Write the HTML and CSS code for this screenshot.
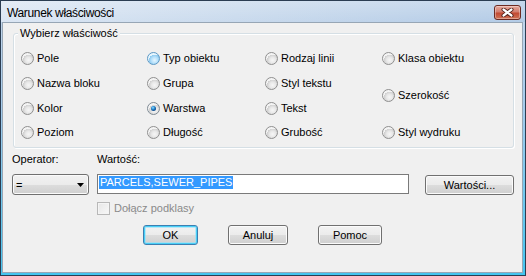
FILE: index.html
```html
<!DOCTYPE html>
<html lang="pl">
<head>
<meta charset="utf-8">
<title>Warunek właściwości</title>
<link rel="stylesheet" href="styles.css">
</head>
<body>
<div class="window">
  <div class="titlebar">
    <span class="title">Warunek właściwości</span>
    <span class="close"><svg width="13" height="9" viewBox="0 0 13 9"><path d="M2.5 1.5 L10.5 7.5 M10.5 1.5 L2.5 7.5" stroke="#4a1a14" stroke-width="4" stroke-linecap="round"/><path d="M2.5 1.5 L10.5 7.5 M10.5 1.5 L2.5 7.5" stroke="#ffffff" stroke-width="2.2" stroke-linecap="round"/></svg></span>
  </div>
  <div class="client">
    <div class="group">
      <div class="legend">Wybierz właściwość</div>
      <div class="options">
        <label class="opt"><span class="radio"></span>Pole</label>
        <label class="opt"><span class="radio hot"></span>Typ obiektu</label>
        <label class="opt"><span class="radio"></span>Rodzaj linii</label>
        <label class="opt"><span class="radio"></span>Klasa obiektu</label>
        <label class="opt"><span class="radio"></span>Nazwa bloku</label>
        <label class="opt"><span class="radio"></span>Grupa</label>
        <label class="opt"><span class="radio"></span>Styl tekstu</label>
        <label class="opt tall"><span class="radio"></span>Szerokość</label>
        <label class="opt"><span class="radio"></span>Kolor</label>
        <label class="opt"><span class="radio checked"></span>Warstwa</label>
        <label class="opt"><span class="radio"></span>Tekst</label>
        <label class="opt"><span class="radio"></span>Poziom</label>
        <label class="opt"><span class="radio"></span>Długość</label>
        <label class="opt"><span class="radio"></span>Grubość</label>
        <label class="opt"><span class="radio"></span>Styl wydruku</label>
      </div>
    </div>
    <div class="fields">
      <div class="lbl">Operator:</div>
      <div class="lbl">Wartość:</div>
      <div></div>
      <div class="combo"><span>=</span><svg width="7" height="4" viewBox="0 0 7 4"><polygon points="0,0 7,0 3.5,4" fill="#000"/></svg></div>
      <div class="textbox"><span class="sel">PARCELS,SEWER_PIPES</span></div>
      <div class="btn small">Wartości...</div>
    </div>
    <div class="checkrow">
      <span class="check"></span><span class="checklbl">Dołącz podklasy</span>
    </div>
    <div class="buttons">
      <div class="btn default w-ok">OK</div>
      <div class="btn w-cancel">Anuluj</div>
      <div class="btn w-help">Pomoc</div>
    </div>
  </div>
</div>
</body>
</html>
```
FILE: styles.css
```css
* { box-sizing: border-box; }
html, body { margin: 0; padding: 0; }
body {
  width: 526px;
  height: 276px;
  overflow: hidden;
  font-family: "Liberation Sans", Arial, sans-serif;
  font-size: 11px;
  color: #000;
  background: #fff;
}
.window {
  width: 526px;
  height: 276px;
  border: 1px solid #2b3d52;
  display: flex;
  flex-direction: column;
  background: linear-gradient(180deg, #d6e3f2 0px, #bfd4eb 22px, #a3cbec 110px, #43c5f0 274px);
}
.titlebar {
  height: 21px;
  flex: none;
  display: flex;
  justify-content: space-between;
  align-items: flex-start;
  padding: 0 4px 0 6px;
  background:
    linear-gradient(180deg, rgba(255,255,255,0.25), rgba(255,255,255,0) 21px),
    linear-gradient(90deg, #dbe6f3 0%, #c9daed 45%, #b3cbe6 100%);
}
.title {
  margin-top: 5px;
  font-size: 12px;
  line-height: 14px;
  letter-spacing: -0.35px;
  color: #000;
}
.close {
  margin-top: 4px;
  width: 27px;
  height: 15px;
  border: 1px solid #6b2a22;
  border-radius: 3px;
  display: flex;
  align-items: center;
  justify-content: center;
  background: linear-gradient(180deg, #e6aa9e 0%, #d27d6e 45%, #c24a33 55%, #cf7357 100%);
  box-shadow: inset 0 0 0 1px rgba(255,255,255,0.35);
}
.client {
  flex: 1;
  margin: 0 2px 2px 1px;
  border: 1px solid #97a6b5;
  background: #f0f0f0;
}
.group {
  position: relative;
  margin: 10px 8px 0 10px;
  border: 1px solid #d5dfe5;
  border-radius: 3px;
  box-shadow: inset 1px 1px 0 #fff, 1px 1px 0 #fff;
  padding: 12px 0 2px 7px;
}
.legend {
  position: absolute;
  left: 4px;
  top: -7px;
  padding: 0 2px;
  line-height: 13px;
  background: #f0f0f0;
}
.options {
  display: grid;
  grid-template-columns: 126px 118px 117px 1fr;
  grid-template-rows: 25px 25px 24px 25px;
}
.opt {
  display: flex;
  align-items: center;
  line-height: 13px;
}
.opt.tall { grid-row: span 2; }
.radio {
  position: relative;
  flex: none;
  width: 13px;
  height: 13px;
  margin-right: 3px;
  border-radius: 50%;
  border: 1px solid #8f8f8f;
  background: radial-gradient(circle at 60% 65%, #f6f6f6 0, #e8e8e8 3px, #cfcfcf 5.5px, #f4f4f4 5.6px);
}
.radio.hot {
  border-color: #5c98c4;
  background: radial-gradient(circle at 60% 65%, #e6f6ff 0, #b9e2fb 3px, #8cc9ef 5.5px, #e8f6fe 5.6px);
}
.radio.checked {
  border-color: #7f8a94;
}
.radio.checked::after {
  content: "";
  position: absolute;
  left: 3px;
  top: 3px;
  width: 5px;
  height: 5px;
  border-radius: 50%;
  background: radial-gradient(circle at 40% 35%, #9be0ff 0, #2a8fd6 1.5px, #0b4a8c 3px);
}
.fields {
  display: grid;
  grid-template-columns: 85px 328px 89px;
  grid-template-rows: 13px 21px;
  row-gap: 8px;
  margin: 5px 0 0 9px;
}
.lbl { line-height: 13px; }
.combo {
  width: 77px;
  height: 21px;
  display: flex;
  align-items: center;
  justify-content: space-between;
  padding: 0 4px 0 3px;
  border: 1px solid #707070;
  border-radius: 3px;
  background: linear-gradient(180deg, #f2f2f2 0%, #ebebeb 50%, #dddddd 50%, #cfcfcf 100%);
  box-shadow: inset 0 0 0 1px #fbfbfb;
}
.textbox {
  width: 312px;
  height: 20px;
  border: 1px solid #7a7a7a;
  background: #fff;
  padding: 1px 0 0 1px;
}
.sel {
  display: inline-block;
  height: 13px;
  line-height: 13px;
  padding: 0 1px;
  background: #3399ff;
  color: #fff;
  vertical-align: top;
}
.btn {
  height: 20px;
  line-height: 18px;
  text-align: center;
  border: 1px solid #707070;
  border-radius: 3px;
  background: linear-gradient(180deg, #f2f2f2 0%, #ebebeb 50%, #dddddd 50%, #cfcfcf 100%);
  box-shadow: inset 0 0 0 1px #fbfbfb;
}
.btn.small { width: 89px; margin-top: 1px; }
.btn.default {
  border-color: #3c7fb1;
  box-shadow: inset 0 0 0 1px #48cff7, inset 0 0 0 2px rgba(150,225,250,0.6);
}
.w-ok { width: 55px; }
.w-cancel { width: 60px; }
.w-help { width: 64px; }
.checkrow {
  display: flex;
  align-items: center;
  margin: 7px 0 0 94px;
  height: 13px;
}
.check {
  width: 13px;
  height: 13px;
  border: 1px solid #b8b8b8;
  background: linear-gradient(135deg, #e6e6e6, #f8f8f8);
  box-shadow: inset 0 0 0 1px #f4f4f4;
  margin-right: 4px;
}
.checklbl {
  line-height: 13px;
  color: #8a8a8a;
}
.buttons {
  display: flex;
  gap: 30px;
  margin: 10px 0 0 140px;
}
```
